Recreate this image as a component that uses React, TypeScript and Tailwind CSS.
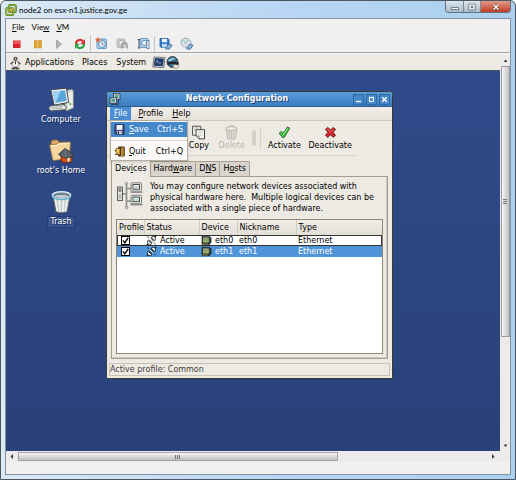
import { useState, type ReactNode } from 'react'

const DEVICES = [
  { device: 'eth0', nickname: 'eth0', type: 'Ethernet', status: 'Active' },
  { device: 'eth1', nickname: 'eth1', type: 'Ethernet', status: 'Active' },
]

function VSphereIcon() {
  return (
    <svg width="12" height="12" viewBox="0 0 12 12" fill="none">
      <rect x="3.8" y="1" width="7" height="7" rx="1.6" stroke="#3f6d22" strokeWidth="2" />
      <rect x="3.8" y="1" width="7" height="7" rx="1.6" stroke="#9cc43c" strokeWidth="1.1" />
      <rect x="1.2" y="4" width="7" height="7" rx="1.6" stroke="#3f6d22" strokeWidth="2" />
      <rect x="1.2" y="4" width="7" height="7" rx="1.6" stroke="#b5cf4a" strokeWidth="1.1" />
      <path d="M4 8 8 4" stroke="#e8a02c" strokeWidth="1.4" />
    </svg>
  )
}

function StopIcon() {
  return (
    <svg width="12" height="12" viewBox="0 0 12 12">
      <rect x="2" y="2.5" width="7.5" height="7.5" fill="#d8232a" />
      <rect x="2.5" y="3" width="6.5" height="3" fill="#f0565a" />
    </svg>
  )
}

function PauseIcon() {
  return (
    <svg width="12" height="12" viewBox="0 0 12 12">
      <path d="M2.5 2.5h2.6v7.5H2.5zM6.7 2.5h2.6v7.5H6.7z" fill="#f2a81d" stroke="#c07d10" strokeWidth=".6" />
    </svg>
  )
}

function PlayIcon() {
  return (
    <svg width="12" height="12" viewBox="0 0 12 12">
      <path d="M3.5 2 8.5 6.2 3.5 10.5z" fill="#b4b4b4" stroke="#989898" strokeWidth=".7" />
    </svg>
  )
}

function ResetIcon() {
  return (
    <svg width="12" height="12" viewBox="0 0 12 12">
      <path d="M2.2 6A3.8 3.4 0 0 1 9 3.4" fill="none" stroke="#d3302f" strokeWidth="2.2" />
      <path d="M11 1v5.2H6.2z" fill="#d3302f" />
      <path d="M9.8 6A3.8 3.4 0 0 1 3 8.6" fill="none" stroke="#2fa043" strokeWidth="2.2" />
      <path d="M1 11V5.8h4.8z" fill="#2fa043" />
    </svg>
  )
}

function SnapshotIcon() {
  return (
    <svg width="13" height="13" viewBox="0 0 13 13">
      <rect x="2" y="2" width="9.5" height="9.5" rx="1" fill="#a9cbe8" stroke="#6b9cc6" />
      <circle cx="7" cy="7" r="3.4" fill="#f3f9fd" stroke="#5b8db9" />
      <path d="M7 5v2.2l1.6.8" fill="none" stroke="#2f5f90" strokeWidth=".9" />
      <path d="m2.8 0 .8 1.8L5.6 2 4.2 3.3l.4 2-1.8-1L1 5.3l.4-2L0 2l2-.2z" fill="#f0622c" />
    </svg>
  )
}

function RevertIcon() {
  return (
    <svg width="13" height="13" viewBox="0 0 13 13">
      <rect x="1" y="2" width="8" height="8.5" rx="1" fill="#cfcfcf" stroke="#b5b5b5" />
      <circle cx="5.4" cy="6" r="2.7" fill="#ececec" stroke="#adadad" />
      <path d="M6 11.5V8.2A2.4 2.4 0 0 1 11 8.2v3.3" fill="none" stroke="#9d9d9d" strokeWidth="1.6" />
    </svg>
  )
}

function SnapshotManagerIcon() {
  return (
    <svg width="13" height="13" viewBox="0 0 13 13">
      <rect x="3" y="1.5" width="8" height="9" rx="1" fill="#b7d3eb" stroke="#6b9cc6" />
      <circle cx="7.2" cy="6" r="2.6" fill="#f3f9fd" stroke="#5b8db9" />
      <path d="M.8 2.5h2.4M2 2.5v8.5M.8 11h2.4" fill="none" stroke="#3d4d5e" />
      <path d="M9.8 3.5h2.2v8H9.8z" fill="#f6fafd" stroke="#3d6288" strokeWidth=".7" />
    </svg>
  )
}

function FloppyConnectIcon() {
  return (
    <svg width="14" height="13" viewBox="0 0 14 13">
      <path d="M1 1.5h8l1 1v8H2l-1-1z" fill="#3b7fd0" stroke="#205497" strokeWidth=".8" />
      <path d="M3 1.8h5v3.4H3z" fill="#eaf3fb" />
      <path d="M3 7h5v3.5H3z" fill="#bfd6ec" />
      <path d="m6.5 11.8 3.2-5 3.5 1.4-3 4z" fill="#8ab4dc" stroke="#31648f" strokeWidth=".8" />
    </svg>
  )
}

function DiscConnectIcon() {
  return (
    <svg width="14" height="13" viewBox="0 0 14 13">
      <ellipse cx="6" cy="5.8" rx="5.2" ry="4.4" fill="#dfe6ec" stroke="#8f9daa" strokeWidth=".8" transform="rotate(25 6 5.8)" />
      <path d="M6 5.8 2 3M6 5.8 9 2.2" stroke="#9fd0c0" strokeWidth="1.2" />
      <circle cx="6" cy="5.8" r="1.2" fill="#fff" stroke="#8795a3" strokeWidth=".6" />
      <path d="m6.5 11.8 3.2-4.6 3.5 1.2-3 3.8z" fill="#8ab4dc" stroke="#31648f" strokeWidth=".8" />
    </svg>
  )
}

function FootIcon() {
  return (
    <svg width="11" height="14" viewBox="0 0 11 14">
      <circle cx="5.5" cy="2.8" r="2.1" fill="#4a4a4a" />
      <path d="M2.8 5.8 5.5 4.8l2.7 1 .6 3.5-1.5 2.2H3.7L2.2 9.3z" fill="#f3f3f0" stroke="#777" strokeWidth=".6" />
      <path d="M3 5.8.6 8.2M8 5.8l2.4 2.4" stroke="#555" strokeWidth="1.4" />
      <path d="M5.5 5.3v3" stroke="#333" />
      <path d="M1.6 12.6h2.9l.3-2M9.4 12.6H6.5l-.3-2" fill="none" stroke="#4a4a4a" strokeWidth="1.7" />
      <circle cx="5.5" cy="2.6" r=".8" fill="#e4e4e4" />
    </svg>
  )
}

function TerminalIcon() {
  return (
    <svg width="14" height="13" viewBox="0 0 14 13">
      <path d="m2 1 11 .6-1.2 10L.8 11z" fill="#ccd1d6" stroke="#59616c" strokeWidth=".8" />
      <path d="m3.2 2.6 8.2.4-.9 6.8-8.2-.4z" fill="#1f3c6e" stroke="#12264a" strokeWidth=".6" />
      <path d="m4.5 4.5 1.6 1-1.8 1M6.8 7h2" fill="none" stroke="#dfe9f8" strokeWidth=".8" />
    </svg>
  )
}

function GlobeIcon() {
  return (
    <svg width="14" height="13" viewBox="0 0 14 13">
      <circle cx="6.5" cy="6" r="5.4" fill="#3f6f8e" stroke="#1d2b38" strokeWidth=".9" />
      <path d="M2 4.5C4 1.5 8 1 9.5 2.5 8 4.5 5 4 4.5 6.5z" fill="#8fc0d6" />
      <path d="M1.2 6.5c3-1.4 8-1.4 11.6.2l-.4 2.6C9 7.6 5 7.8 1.8 9z" fill="#23272d" />
      <path d="M7 9c2-.3 4.4-.3 6 .4l-1.6 2.8-4-.4z" fill="#f1eee4" stroke="#666" strokeWidth=".6" />
    </svg>
  )
}

function ComputerIcon() {
  return (
    <svg width="28" height="26" viewBox="0 0 26 24">
      <path d="m17.5 3.5 5-1.5 2 1.5v16l-6 2.4-2-1.5z" fill="#eceeea" stroke="#80857f" strokeWidth=".8" />
      <path d="m18.4 21.5.2-17 5.7-1" fill="none" stroke="#b8bdb8" strokeWidth=".7" />
      <circle cx="21.7" cy="15.8" r="1" fill="#4fb04a" />
      <path d="M3.5 2.5 18 1l2.2 13.2-13.6 2.6z" fill="#f3f4f1" stroke="#3d4348" strokeWidth=".9" />
      <path d="M5.2 4.2 16.7 3l1.7 9.7-10.7 2z" fill="#58a5dc" />
      <path d="m5.2 4.2 7.7-.8L8 14.6z" fill="#9fd2f2" />
      <path d="m10 16.5 4.5-.8.6 2-4 .9z" fill="#c6cac5" />
      <path d="m1.5 19.5 2-2.2 12-1 3 2.2-2 2.5-13 1.2z" fill="#e7e9e5" stroke="#4b5052" strokeWidth=".8" />
      <path d="m4 19 10.5-1M4.5 20.5 14 19.6" stroke="#8f9593" strokeWidth=".8" strokeDasharray="1.5 .5" />
    </svg>
  )
}

function HomeIcon() {
  return (
    <svg width="26" height="26" viewBox="0 0 26 26">
      <path d="M3 4.5 4.5 2h5L11 4h10l1 1.5V20L5 22z" fill="#dcae6a" stroke="#8b6732" strokeWidth=".8" />
      <path d="M1.5 7 9 6l1.5-1.5L22.5 4 21 20.5 5 22.5z" fill="#f5d5a0" stroke="#9a7338" strokeWidth=".8" />
      <path d="M3 8.2 10 7.2l1.3-1.4 10-.5" fill="none" stroke="#fff0d2" />
      <path d="m13 17 5-4 6 4v7l-7.5 1-3.5-1.5z" fill="#c7501c" stroke="#541f0a" strokeWidth=".8" />
      <path d="m10.5 16.5 6.5-6 8.5 6-.8 2.3L18 20z" fill="#596066" stroke="#25292c" strokeWidth=".9" />
      <path d="m17 10.5 1 9.3M12.5 16.5l4.7 2.5" stroke="#7d868d" strokeWidth=".7" />
      <path d="m19.5 20 2.2-.5v3.8l-2.2.4z" fill="#f8f1e8" />
    </svg>
  )
}

function TrashIcon() {
  return (
    <svg width="23" height="25" viewBox="0 0 24 25">
      <path d="M3 5h18l-3 16.5c-2 2.2-10 2.2-12 0z" fill="#d9dcdc" stroke="#50565c" strokeWidth=".9" />
      <path d="M5.5 9 8 21.5M9.7 10l.8 12.5M14 10l-.5 12.5M18.2 9l-2.4 12.5" stroke="#f7f8f8" strokeWidth="1.2" />
      <path d="M7.5 10 9.3 22M12 10v12.5M16 10l-1 12" stroke="#b9bfc1" strokeWidth=".7" />
      <ellipse cx="12" cy="5" rx="9.6" ry="3.8" fill="#6c7f93" stroke="#d9edf5" strokeWidth="1.5" />
      <path d="M4.5 6c2.5-1.8 12.5-1.8 15 0-3 2.3-12 2.3-15 0z" fill="#c6ccd0" />
      <path d="M2.4 6c1.5 4.5 17.7 4.5 19.2 0" fill="none" stroke="#68aecb" strokeWidth="1.5" />
    </svg>
  )
}

function NetworkAppIcon() {
  return (
    <svg width="12" height="12" viewBox="0 0 12 12">
      <rect x="4.5" y=".8" width="6.5" height="5.4" fill="#d5dcd8" stroke="#27333d" strokeWidth=".8" />
      <rect x="6" y="2" width="3.5" height="2.8" fill="#4c9c92" />
      <rect x="1" y="4.8" width="6.5" height="5.4" fill="#d5dcd8" stroke="#27333d" strokeWidth=".8" />
      <rect x="2.4" y="6" width="3.6" height="2.8" fill="#4c9c92" />
      <path d="M2 11.3h7.5V7" fill="none" stroke="#27333d" strokeWidth=".9" />
    </svg>
  )
}

function SaveIcon() {
  return (
    <svg width="11" height="11" viewBox="0 0 11 11">
      <path d="M1 .8h9v9.4H2L1 9.2z" fill="#50528c" stroke="#20234f" strokeWidth=".9" />
      <path d="M2.6 1h5.8v4.8H2.6z" fill="#f4f4f6" />
      <path d="M3 7.2h5v3H3z" fill="#c9cbd2" />
      <path d="M3.8 7.8h1.2V10H3.8z" fill="#20234f" />
    </svg>
  )
}

function QuitIcon() {
  return (
    <svg width="11" height="11" viewBox="0 0 11 11">
      <path d="M4.5 1h5.7v9H4.5z" fill="#8b5a1c" stroke="#2d1d08" strokeWidth=".9" />
      <path d="M5.7 2h3.2v7H5.7z" fill="#3b2710" />
      <path d="m9.5 1-2.6 1.4v7.5L9.5 10z" fill="#c08a35" />
      <path d="M5.5 2.5H2.2v2H.8L3.5 7 1 8.5h4.5" fill="#f5c651" stroke="#5a4210" strokeWidth=".8" />
    </svg>
  )
}

function CopyIcon() {
  return (
    <svg width="15" height="15" viewBox="0 0 15 15">
      <path d="M1.5 1.2h8.3v9H1.5z" fill="#f2f1ee" stroke="#55544f" />
      <path d="M3 3h5.2M3 5h2" stroke="#b3b1aa" />
      <path d="M5 4.7h8.5v9.2H8L5 11z" fill="#fbfbfa" stroke="#45443f" />
      <path d="M6.7 7h5M6.7 8.8h5M8.5 10.6h3.2" stroke="#c6c5bf" strokeWidth=".8" />
      <path d="M5 11h3v3" fill="#dcdbd6" stroke="#55544f" strokeWidth=".7" />
    </svg>
  )
}

function DeleteIcon() {
  return (
    <svg width="15" height="15" viewBox="0 0 15 15">
      <path d="M2.3 4h10.4l-1.2 9.5c-2 1.1-6 1.1-8 0z" fill="#dedbd5" stroke="#b9b5ad" strokeWidth=".9" />
      <path d="M5 6l.6 7.5M7.5 6.5v7.3M10 6l-.6 7.5" stroke="#bdb9b2" strokeWidth=".8" />
      <ellipse cx="7.5" cy="3.6" rx="5.7" ry="2" fill="#e9e7e2" stroke="#b9b5ad" />
      <path d="M5 2.2 6.5.7h2.6L10 2.2" fill="none" stroke="#bdb9b2" strokeWidth=".9" />
    </svg>
  )
}

function ActivateIcon() {
  return (
    <svg width="13" height="13" viewBox="0 0 13 13">
      <path d="m1.2 7.2 2-1.7 1.9 1.9L9.5 1l2.2 1.2-5.6 9.3-1.3.2z" fill="#43cf43" stroke="#14501a" strokeWidth=".9" strokeLinejoin="round" />
      <path d="M5.2 8.7 9.8 2.2" stroke="#a8f29b" strokeWidth=".9" />
    </svg>
  )
}

function DeactivateIcon() {
  return (
    <svg width="13" height="13" viewBox="0 0 13 13">
      <path d="m1.5 3.4 2.2-2 2.8 2.5 2.8-2.5 2.2 2L9 6.3l2.5 3-2.2 2-2.8-2.6-2.8 2.6-2.2-2 2.5-3z" fill="#d3282b" stroke="#5e0f10" strokeWidth=".9" strokeLinejoin="round" />
      <path d="m3.3 3.3 3.2 2.8 3-2.8" fill="none" stroke="#f08482" strokeWidth=".8" />
    </svg>
  )
}

function TopologyIcon() {
  return (
    <svg className="shrink-0" width="28" height="29" viewBox="0 0 28 29">
      <path d="M10.5 2v25M6 13h4.5M10.5 7.5H15M10.5 20H15" fill="none" stroke="#8d8d88" strokeWidth="1.6" />
      <circle cx="10.5" cy="2.5" r="1.3" fill="#c9c9c5" stroke="#777" strokeWidth=".6" />
      <circle cx="10.5" cy="26.5" r="1.3" fill="#c9c9c5" stroke="#777" strokeWidth=".6" />
      <rect x="1.5" y="6" width="5" height="13.5" fill="#e3e3df" stroke="#55554f" strokeWidth=".9" />
      <path d="M2.5 8h3M2.5 10h3" stroke="#333" strokeWidth="1" />
      <path d="M2.5 13h3v5h-3z" fill="#bcbcb6" />
      <rect x="15" y="1.8" width="10.5" height="8.4" rx="1" fill="#e6e6e2" stroke="#77776f" strokeWidth=".9" />
      <rect x="17" y="3.6" width="6.5" height="4.6" fill="#f6fbfb" stroke="#222" strokeWidth=".8" />
      <path d="M17.6 5h5.2v2.6h-5.2z" fill="#bcd8da" />
      <path d="M14.5 11.2h12" stroke="#8d8d88" strokeWidth="1.5" />
      <rect x="15" y="14.3" width="10.5" height="8.4" rx="1" fill="#e6e6e2" stroke="#77776f" strokeWidth=".9" />
      <rect x="17" y="16.1" width="6.5" height="4.6" fill="#f6fbfb" stroke="#222" strokeWidth=".8" />
      <path d="M17.6 17.5h5.2v2.6h-5.2z" fill="#bcd8da" />
      <path d="M14.5 23.7h12" stroke="#8d8d88" strokeWidth="1.5" />
    </svg>
  )
}

// two plug halves joined on a diagonal, on a white halo so it reads on the selected row
function PlugIcon() {
  return (
    <svg width="11" height="11" viewBox="0 0 11 11">
      <path d="M1 9.8 3 8M8.2 2.8 10 1" stroke="#111" strokeWidth="1.4" />
      <path d="M2.2 5.4 5.6 8.8C4.4 10 2.8 9.6 2 8.8s-1-2.2.2-3.4z" fill="#fff" stroke="#161616" strokeWidth=".9" />
      <path d="M5.4 2.2 8.8 5.6c1.2-1.2.8-2.8 0-3.6s-2.2-1-3.4.2z" fill="#fff" stroke="#161616" strokeWidth=".9" />
      <path d="M3 4.6 6.4 8M4.6 3 8 6.4" stroke="#161616" />
      <path d="M3.8 3.8 7.2 7.2" stroke="#fff" />
      <path d="m1.2 1.6 1.6 1M9.6 9.2 8.2 8" stroke="#161616" strokeWidth=".9" />
    </svg>
  )
}

function CardIcon() {
  return (
    <svg width="11" height="11" viewBox="0 0 11 11">
      <path d="M1 1.2h7.6v1.3H10V8H8.6v1.6H1z" fill="#33413a" stroke="#161c19" strokeWidth=".7" />
      <path d="M2.4 3.6h5v3.4h-5z" fill="#8ea25c" stroke="#cdd39d" strokeWidth=".6" />
      <path d="M2 9.5V8.4M4 9.5V8.4M6 9.5V8.4" stroke="#d8b94c" strokeWidth=".9" />
      <path d="M1.8 2.4h6" stroke="#8f9c94" strokeWidth=".7" />
    </svg>
  )
}

function ToolButton({ label, children }: { label: string; children: ReactNode }) {
  return (
    <button aria-label={label} className="flex h-4 w-[21px] items-center justify-center">
      {children}
    </button>
  )
}

function DesktopIcon({ label, selected, children }: { label: string; selected?: boolean; children: ReactNode }) {
  return (
    <button className="flex h-[51px] flex-col items-center text-white">
      <span className="flex h-[26px] items-center">{children}</span>
      <span
        className={
          selected
            ? 'mt-px border border-[#253b73] bg-[#3a5590] px-0.5 leading-[10px] [text-shadow:1px_1px_0_#15264f]'
            : 'mt-px border border-transparent px-0.5 leading-[10px] [text-shadow:1px_1px_0_#15264f]'
        }
      >
        {label}
      </span>
    </button>
  )
}

function Tab({ active, onClick, children }: { active: boolean; onClick: () => void; children: ReactNode }) {
  return (
    <button
      role="tab"
      aria-selected={active}
      onClick={onClick}
      className={
        active
          ? 'relative -mb-px h-[17px] rounded-t-xs border border-b-0 border-[#a49c8e] border-t-[#4a90d9] bg-[#edeae4] px-[3px]'
          : 'h-[15px] rounded-tr-xs border border-b-0 border-l-0 border-[#a49c8e] bg-[#dad5cc] px-[3px]'
      }
    >
      {children}
    </button>
  )
}

function RowCheckbox({ label }: { label: string }) {
  return (
    <label className="ml-1 grid size-[9px]">
      <input
        type="checkbox"
        defaultChecked
        aria-label={label}
        className="peer col-start-1 row-start-1 size-[9px] appearance-none border border-black bg-white"
      />
      <svg className="pointer-events-none invisible col-start-1 row-start-1 peer-checked:visible" width="9" height="9" viewBox="0 0 9 9">
        <path d="M2 4.4 3.8 6.8 7.2 1.8" fill="none" stroke="#000" strokeWidth="1.4" />
      </svg>
    </label>
  )
}

function FileMenu() {
  return (
    <div role="menu" className="absolute left-0 top-full z-10 w-[78px] border border-[#b5ad9f] bg-[#faf9f7] py-px shadow-sm">
      <button role="menuitem" className="flex h-[15px] w-full items-center gap-1 bg-[#4388cb] pl-[3px] pr-1 text-white">
        <SaveIcon />
        <span><u>S</u>ave</span>
        <span className="ml-auto">Ctrl+S</span>
      </button>
      <div className="my-[3px] h-px bg-[#dcd7cd]" />
      <button role="menuitem" className="flex h-[15px] w-full items-center gap-1 pl-[3px] pr-1">
        <QuitIcon />
        <span><u>Q</u>uit</span>
        <span className="ml-auto">Ctrl+Q</span>
      </button>
    </div>
  )
}

function NetworkWindow() {
  const [tab, setTab] = useState('devices')
  const [menuOpen, setMenuOpen] = useState(true)
  const [selected, setSelected] = useState('eth1')

  return (
    <section className="absolute left-[100px] top-5 w-[287px] rounded-t-sm border border-[#3b3a36] bg-[#edeae4] text-black">
      <header className="flex h-[15px] items-center rounded-t-xs border-b border-[#2c5c8d] bg-gradient-to-b from-[#5b9cdc] to-[#3a7dbf] px-0.5 text-white">
        <NetworkAppIcon />
        <h1 className="flex-1 text-center font-bold [text-shadow:1px_1px_0_#1d4670]">Network Configuration</h1>
        <div className="flex gap-0.5">
          <button aria-label="Minimize" className="flex size-[11px] items-center justify-center border border-[#2f679f] bg-[#4587ca]">
            <svg width="9" height="9" viewBox="0 0 9 9"><path d="M2 6.5h5" stroke="#fff" strokeWidth="1.3" /></svg>
          </button>
          <button aria-label="Maximize" className="flex size-[11px] items-center justify-center border border-[#2f679f] bg-[#4587ca]">
            <svg width="9" height="9" viewBox="0 0 9 9"><path d="M2.5 2.5h4v4h-4z" fill="none" stroke="#fff" /><path d="M2 2.5h5" stroke="#fff" strokeWidth="1.4" /></svg>
          </button>
          <button aria-label="Close" className="flex size-[11px] items-center justify-center border border-[#2f679f] bg-[#4587ca]">
            <svg width="9" height="9" viewBox="0 0 9 9"><path d="m2.2 2.2 4.6 4.6M6.8 2.2 2.2 6.8" stroke="#fff" strokeWidth="1.4" /></svg>
          </button>
        </div>
      </header>

      <nav className="flex h-[14px] border-b border-[#cdc8bd] bg-gradient-to-b from-[#f1eee9] to-[#e5e1d9] pl-[3px]">
        <div className="relative">
          <button
            className={menuOpen ? 'h-[14px] bg-[#4a8fd3] px-1 text-white' : 'h-[14px] px-1'}
            onClick={() => setMenuOpen(!menuOpen)}
          >
            <u>F</u>ile
          </button>
          {menuOpen && <FileMenu />}
        </div>
        <button className="px-[7px]"><u>P</u>rofile</button>
        <button className="px-0.5"><u>H</u>elp</button>
      </nav>

      <div className="mr-9 flex h-[35px] items-center border-b border-[#d8d3ca] pl-[79px]">
        <button className="flex w-[26px] flex-col items-center">
          <CopyIcon />
          <span className="leading-[11px]">Copy</span>
        </button>
        <button disabled className="flex w-10 flex-col items-center text-[#b9b5ad]">
          <DeleteIcon />
          <span className="leading-[11px]">Delete</span>
        </button>
        <span className="h-4 w-1 rounded-xs bg-[#d5d0c7]" />
        <span className="ml-1 h-[22px] w-px bg-[#d5d0c7]" />
        <button className="ml-1 flex w-10 flex-col items-center">
          <span className="flex h-[15px] items-center"><ActivateIcon /></span>
          <span className="leading-[11px]">Activate</span>
        </button>
        <button className="flex w-[52px] flex-col items-center">
          <span className="flex h-[15px] items-center"><DeactivateIcon /></span>
          <span className="leading-[11px]">Deactivate</span>
        </button>
      </div>

      <div className="px-1 pt-1">
        <div role="tablist" className="flex items-end">
          <Tab active={tab === 'devices'} onClick={() => setTab('devices')}>Dev<u>i</u>ces</Tab>
          <Tab active={tab === 'hardware'} onClick={() => setTab('hardware')}>Hard<u>w</u>are</Tab>
          <Tab active={tab === 'dns'} onClick={() => setTab('dns')}>D<u>N</u>S</Tab>
          <Tab active={tab === 'hosts'} onClick={() => setTab('hosts')}>H<u>o</u>sts</Tab>
        </div>
        <div className="border border-[#a49c8e] p-1 shadow-[inset_-1px_-1px_0_#cfc9be]">
          <div className="flex h-[38px] gap-1.5">
            <TopologyIcon />
            <p className="flex-1 whitespace-nowrap leading-[11px]">
              You may configure network devices associated with<br />
              physical hardware here.&nbsp; Multiple logical devices can be<br />
              associated with a single piece of hardware.
            </p>
          </div>
          <div className="h-[135px] border border-[#8f8574] bg-white">
            <table className="w-full table-fixed border-collapse">
              <thead>
                <tr className="h-[15px] bg-gradient-to-b from-[#f1efea] to-[#e3dfd7] text-left">
                  <th className="w-[27px] overflow-hidden whitespace-nowrap border-r border-[#d0cabf] py-0 pl-0.5 font-normal">Profile</th>
                  <th className="w-[55px] border-r border-[#d0cabf] py-0 pl-0.5 font-normal">Status</th>
                  <th className="w-[38px] border-r border-[#d0cabf] py-0 pl-0.5 font-normal">Device</th>
                  <th className="w-[59px] border-r border-[#d0cabf] py-0 pl-0.5 font-normal">Nickname</th>
                  <th className="py-0 pl-0.5 font-normal">Type</th>
                </tr>
              </thead>
              <tbody>
                {DEVICES.map((d) => (
                  <tr
                    key={d.device}
                    onClick={() => setSelected(d.device)}
                    className={selected === d.device ? 'h-[11px] bg-[#4f94d8] text-white' : 'h-[11px] outline-1 -outline-offset-1 outline-[#333]'}
                  >
                    <td className="p-0"><RowCheckbox label={d.device} /></td>
                    <td className="p-0">
                      <span className="flex h-[11px] items-center gap-[3px] pl-0.5"><PlugIcon />{d.status}</span>
                    </td>
                    <td className="p-0">
                      <span className="flex h-[11px] items-center gap-[3px] pl-0.5"><CardIcon />{d.device}</span>
                    </td>
                    <td className="py-0 pl-0.5 leading-[11px]">{d.nickname}</td>
                    <td className="py-0 pl-0.5 leading-[11px]">{d.type}</td>
                  </tr>
                ))}
              </tbody>
            </table>
          </div>
        </div>
      </div>

      <footer className="mx-0.5 mb-0.5 mt-1 border border-[#c8c2b7] leading-[11px] text-[#3f3d39]">Active profile: Common</footer>
    </section>
  )
}

export default function App() {
  return (
    <div className="flex min-h-screen flex-col rounded-t-md border border-[#4c5661] bg-[#c3dcf3] bg-gradient-to-r from-[#dceaf6] via-[#bad7f4] to-[#acd0f0] px-1 pb-1 font-[Lato,sans-serif] text-[8px] text-black">
      <header className="flex h-[17px] items-center gap-0.5">
        <VSphereIcon />
        <h1 className="flex-1">node2 on esx-n1.justice.gov.ge</h1>
        <div className="flex h-3 self-start overflow-hidden rounded-b-sm border border-t-0 border-[#66727e]">
          <button aria-label="Minimize" className="flex w-[18px] items-center justify-center border-r border-[#7c8996] bg-gradient-to-b from-[#dde7f0] to-[#a9bac9]">
            <svg width="10" height="8" viewBox="0 0 10 8"><path d="M1.5 4.5h7v2h-7z" fill="#fff" stroke="#5d6670" strokeWidth=".8" /></svg>
          </button>
          <button aria-label="Maximize" className="flex w-[17px] items-center justify-center border-r border-[#7c8996] bg-gradient-to-b from-[#dde7f0] to-[#a9bac9]">
            <svg width="10" height="8" viewBox="0 0 10 8"><path d="M1.8 1h6.4v6H1.8z" fill="#fff" stroke="#5d6670" strokeWidth=".8" /><path d="M4 3h2v2H4z" fill="#b7c5d2" stroke="#5d6670" strokeWidth=".7" /></svg>
          </button>
          <button aria-label="Close" className="flex w-[29px] items-center justify-center bg-gradient-to-b from-[#e39a8b] to-[#bf3a22]">
            <svg width="10" height="8" viewBox="0 0 10 8"><path d="m2.5 1.5 5 5M7.5 1.5l-5 5" stroke="#5b2a22" strokeWidth="2.6" /><path d="m2.5 1.5 5 5M7.5 1.5l-5 5" stroke="#fff" strokeWidth="1.6" /></svg>
          </button>
        </div>
      </header>

      <main className="flex flex-1 flex-col border border-[#8593a1] bg-[#f0f0f0]">
        <nav className="flex h-4 items-center gap-[7px] pl-1.5">
          <button><u>F</u>ile</button>
          <button>Vie<u>w</u></button>
          <button><u>V</u>M</button>
        </nav>
        <div className="flex h-[18px] items-center border-b border-[#a5a5a5]">
          <ToolButton label="Power off"><StopIcon /></ToolButton>
          <ToolButton label="Suspend"><PauseIcon /></ToolButton>
          <ToolButton label="Power on"><PlayIcon /></ToolButton>
          <ToolButton label="Reset"><ResetIcon /></ToolButton>
          <span className="h-4 w-px bg-[#c4c4c4]" />
          <ToolButton label="Take snapshot"><SnapshotIcon /></ToolButton>
          <ToolButton label="Revert snapshot"><RevertIcon /></ToolButton>
          <ToolButton label="Manage snapshots"><SnapshotManagerIcon /></ToolButton>
          <span className="h-4 w-px bg-[#c4c4c4]" />
          <ToolButton label="Connect floppy"><FloppyConnectIcon /></ToolButton>
          <ToolButton label="Connect CD"><DiscConnectIcon /></ToolButton>
        </div>

        <div className="flex flex-1 pt-0.5">
          <div className="flex flex-1 flex-col font-['DejaVu_Sans',sans-serif]">
            <nav className="flex h-4 items-center border-b border-[#4d5468] bg-[#edeae3] pl-1">
              <FootIcon />
              <button className="ml-1">Applications</button>
              <button className="ml-2">Places</button>
              <button className="ml-[9px] mr-1.5">System</button>
              <TerminalIcon />
              <GlobeIcon />
            </nav>
            <div className="relative flex-1 bg-gradient-to-b from-[#304b8a] to-[#294179]">
              <div className="flex w-[110px] flex-col pt-4">
                <DesktopIcon label="Computer"><ComputerIcon /></DesktopIcon>
                <DesktopIcon label="root's Home"><HomeIcon /></DesktopIcon>
                <DesktopIcon label="Trash" selected><TrashIcon /></DesktopIcon>
              </div>
              <NetworkWindow />
            </div>
          </div>

          <div className="flex w-[10px] flex-col items-center bg-[#ebebeb]">
            <svg width="9" height="11" viewBox="0 0 9 11"><path d="M2.5 7 4.5 4.5 6.5 7z" fill="#3a3a3a" /></svg>
            <div className="flex h-[271px] w-[9px] items-center justify-center border border-[#9c9c9c] bg-gradient-to-r from-[#f6f6f6] to-[#bfc0c2]">
              <svg width="4" height="6" viewBox="0 0 4 6"><path d="M0 .5h4M0 2.5h4M0 4.5h4" stroke="#777" /></svg>
            </div>
            <svg className="mt-auto" width="9" height="11" viewBox="0 0 9 11"><path d="M2.5 4.5h4L4.5 7z" fill="#3a3a3a" /></svg>
          </div>
        </div>

        <div className="mb-3 flex h-[11px] items-center bg-[#ebebeb] pr-3">
          <svg width="12" height="9" viewBox="0 0 12 9"><path d="M7 2v5L4.5 4.5z" fill="#3a3a3a" /></svg>
          <div className="flex h-[9px] w-[65%] items-center justify-center border border-[#a5a5a5] bg-gradient-to-b from-[#f6f6f6] to-[#bfc0c2]">
            <svg width="6" height="4" viewBox="0 0 6 4"><path d="M.5 0v4M2.5 0v4M4.5 0v4" stroke="#777" /></svg>
          </div>
          <svg className="ml-auto" width="10" height="9" viewBox="0 0 10 9"><path d="M4 2v5l2.5-2.5z" fill="#3a3a3a" /></svg>
        </div>
      </main>
    </div>
  )
}
